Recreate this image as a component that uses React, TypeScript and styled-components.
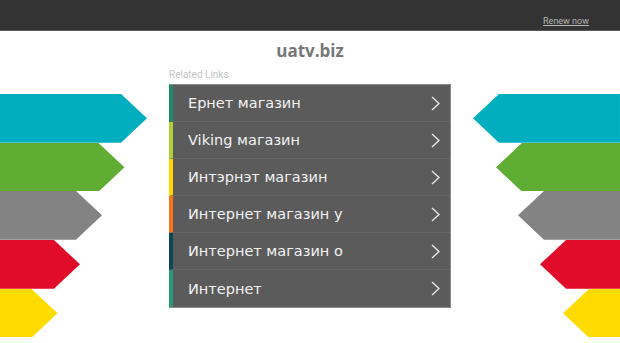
import React from "react";
import styled, { createGlobalStyle } from "styled-components";

const GlobalStyle = createGlobalStyle`
  html, body { margin: 0; padding: 0; background: #ffffff; }
  body { font-family: "DejaVu Sans", "Liberation Sans", sans-serif; }
`;

const Page = styled.div`
  width: 620px;
  height: 343px;
  overflow: hidden;
  background: #fff;
`;

const TopBar = styled.header`
  height: 31px;
  background: #333333;
  border-bottom: 1px solid #5a5a5a;
  display: flex;
  justify-content: flex-end;
  align-items: flex-end;
  padding: 0 31px 4px 0;
  box-sizing: border-box;
`;

const RenewLink = styled.a`
  font-family: "Roboto", "Liberation Sans", sans-serif;
  font-size: 9px;
  line-height: 10px;
  color: #b5b5b5;
  text-decoration: underline;
`;

const Title = styled.h1`
  margin: 0;
  padding-top: 10px;
  text-align: center;
  font-family: "Open Sans", "Liberation Sans", sans-serif;
  font-weight: 700;
  font-size: 17px;
  line-height: 20px;
  color: #777777;
`;

const Main = styled.div`
  display: grid;
  grid-template-columns: 169px 282px 169px;
  margin-top: 8px;
`;

const ArrowStack = styled.div<{ $side: "left" | "right" }>`
  display: flex;
  flex-direction: column;
  align-items: ${(p) => (p.$side === "left" ? "flex-start" : "flex-end")};
  padding-top: 25px;
`;

const Center = styled.div`
  display: flex;
  flex-direction: column;
`;

const RelatedLabel = styled.div`
  font-family: "Roboto", "Liberation Sans", sans-serif;
  font-size: 10px;
  line-height: 12px;
  color: #c4c4c4;
  margin-bottom: 3px;
`;

const LinkList = styled.ul`
  list-style: none;
  margin: 0;
  padding: 0;
  background: #5b5b5b;
  border: 1px solid #8c8c8c;
  border-left: none;
`;

const LinkRow = styled.li<{ $accent: string; $last?: boolean }>`
  height: 37px;
  box-sizing: border-box;
  display: flex;
  align-items: center;
  justify-content: space-between;
  border-left: 4px solid ${(p) => p.$accent};
  border-bottom: ${(p) => (p.$last ? "none" : "1px solid #676767")};
  padding: 0 10px 0 15px;
  font-size: 14.5px;
  color: #f2f2f2;
`;

const Chevron = () => (
  <svg width="9" height="15" viewBox="0 0 9 15">
    <polyline
      points="1,1 8,7.5 1,14"
      fill="none"
      stroke="#e6e6e6"
      strokeWidth="1.4"
    />
  </svg>
);

const Arrow = ({
  width,
  color,
  side,
}: {
  width: number;
  color: string;
  side: "left" | "right";
}) => {
  const h = 48.7;
  const d = 26;
  const pts =
    side === "left"
      ? `0,0 ${width - d},0 ${width},${h / 2} ${width - d},${h} 0,${h}`
      : `${width},0 ${d},0 0,${h / 2} ${d},${h} ${width},${h}`;
  return (
    <svg
      width={width}
      height={h}
      viewBox={`0 0 ${width} ${h}`}
      style={{ display: "block" }}
    >
      <polygon points={pts} fill={color} />
    </svg>
  );
};

const arrows = [
  { color: "#00aebf", width: 147 },
  { color: "#5fad33", width: 124.5 },
  { color: "#838383", width: 102 },
  { color: "#e00c2a", width: 80 },
  { color: "#ffdb00", width: 57.5 },
];

const links = [
  { text: "Ернет магазин", accent: "#1c8a6b" },
  { text: "Viking магазин", accent: "#b0cf33" },
  { text: "Интэрнэт магазин", accent: "#ffd500" },
  { text: "Интернет магазин у", accent: "#f8731b" },
  { text: "Интернет магазин о", accent: "#0b475a" },
  { text: "Интернет", accent: "#27987a" },
];

export default function App() {
  return (
    <Page>
      <GlobalStyle />
      <TopBar>
        <RenewLink href="#">Renew now</RenewLink>
      </TopBar>
      <Title>uatv.biz</Title>
      <Main>
        <ArrowStack $side="left">
          {arrows.map((a) => (
            <Arrow key={a.color} width={a.width} color={a.color} side="left" />
          ))}
        </ArrowStack>
        <Center>
          <RelatedLabel>Related Links</RelatedLabel>
          <LinkList>
            {links.map((l, i) => (
              <LinkRow key={l.text} $accent={l.accent} $last={i === links.length - 1}>
                <span>{l.text}</span>
                <Chevron />
              </LinkRow>
            ))}
          </LinkList>
        </Center>
        <ArrowStack $side="right">
          {arrows.map((a) => (
            <Arrow key={a.color} width={a.width} color={a.color} side="right" />
          ))}
        </ArrowStack>
      </Main>
    </Page>
  );
}
